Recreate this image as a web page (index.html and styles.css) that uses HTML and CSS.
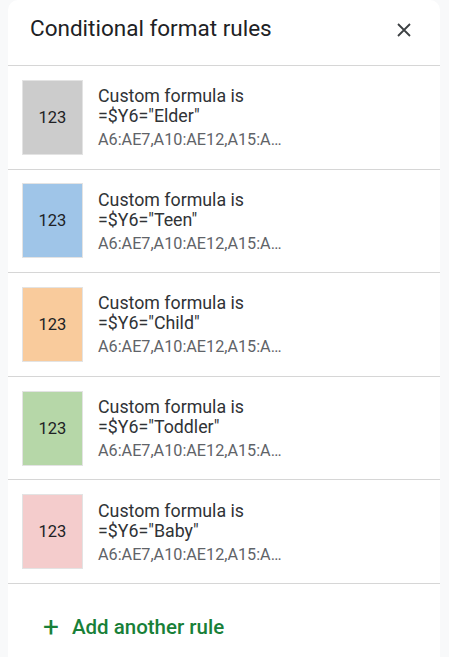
FILE: index.html
```html
<!DOCTYPE html>
<html lang="en">
<head>
    <meta charset="UTF-8">
    <title>Conditional format rules</title>
    <link rel="stylesheet" href="styles.css">
</head>
<body>
    <!-- Side panel -->
    <div class="panel">
        <div class="panel-header">
            <h2>Conditional format rules</h2>
            <button class="close-btn" aria-label="Close">
                <svg width="14" height="14" viewBox="0 0 14 14">
                    <path d="M1 1L13 13M13 1L1 13" stroke="#3c4043" stroke-width="1.8" fill="none"/>
                </svg>
            </button>
        </div>

        <div class="rule">
            <div class="swatch swatch-gray">123</div>
            <div class="rule-text">
                <div class="rule-title">Custom formula is</div>
                <div class="rule-title">=$Y6="Elder"</div>
                <div class="rule-range">A6:AE7,A10:AE12,A15:A…</div>
            </div>
        </div>

        <div class="rule">
            <div class="swatch swatch-blue">123</div>
            <div class="rule-text">
                <div class="rule-title">Custom formula is</div>
                <div class="rule-title">=$Y6="Teen"</div>
                <div class="rule-range">A6:AE7,A10:AE12,A15:A…</div>
            </div>
        </div>

        <div class="rule">
            <div class="swatch swatch-orange">123</div>
            <div class="rule-text">
                <div class="rule-title">Custom formula is</div>
                <div class="rule-title">=$Y6="Child"</div>
                <div class="rule-range">A6:AE7,A10:AE12,A15:A…</div>
            </div>
        </div>

        <div class="rule">
            <div class="swatch swatch-green">123</div>
            <div class="rule-text">
                <div class="rule-title">Custom formula is</div>
                <div class="rule-title">=$Y6="Toddler"</div>
                <div class="rule-range">A6:AE7,A10:AE12,A15:A…</div>
            </div>
        </div>

        <div class="rule">
            <div class="swatch swatch-pink">123</div>
            <div class="rule-text">
                <div class="rule-title">Custom formula is</div>
                <div class="rule-title">=$Y6="Baby"</div>
                <div class="rule-range">A6:AE7,A10:AE12,A15:A…</div>
            </div>
        </div>

        <button class="add-rule">
            <span class="plus">+</span>
            Add another rule
        </button>
    </div>
</body>
</html>
```

FILE: styles.css
```css
/* General Styles */
body {
    font-family: Roboto, 'Liberation Sans', sans-serif;
    margin: 0;
    padding: 0;
    background: #f8f9fa;
    color: #3c4043;
}

.panel {
    margin-left: 8px;
    width: 432px;
    height: 657px;
    background: #ffffff;
    border-radius: 10px 10px 0 0;
}

/* Header */
.panel-header {
    display: flex;
    align-items: center;
    justify-content: space-between;
    height: 65px;
    padding: 0 22px 0 22px;
    border-bottom: 1px solid #d6d6d6;
}

.panel-header h2 {
    margin: 0 0 10px 0;
    font-size: 22.5px;
    font-weight: 400;
    color: #202124;
}

.close-btn {
    display: flex;
    align-items: center;
    justify-content: center;
    width: 30px;
    height: 30px;
    margin: 0 -1px 6px 0;
    padding: 0;
    border: none;
    background: none;
    cursor: pointer;
}

/* Rule rows */
.rule {
    display: flex;
    align-items: center;
    gap: 15px;
    height: 102.6px;
    padding: 0 14px;
    border-bottom: 1px solid #d6d6d6;
}

.swatch {
    display: flex;
    align-items: center;
    justify-content: center;
    flex: none;
    width: 59px;
    height: 73px;
    border: 1px solid #e3e3e3;
    font-size: 16.5px;
    color: #202124;
}

.swatch-gray { background: #cccccc; }
.swatch-blue { background: #9fc5e8; }
.swatch-orange { background: #f9cb9c; }
.swatch-green { background: #b6d7a8; }
.swatch-pink { background: #f4cccc; }

.rule-text {
    margin-top: 2px;
}

.rule-title {
    font-size: 17.8px;
    line-height: 20px;
    font-weight: 400;
    color: #303336;
}

.rule-range {
    margin-top: 4px;
    font-size: 16.2px;
    line-height: 20px;
    color: #5f6368;
}

/* Add rule button */
.add-rule {
    display: flex;
    align-items: center;
    gap: 13px;
    margin: 25px 0 0 31px;
    padding: 6px 4px;
    border: none;
    background: none;
    font-family: inherit;
    font-size: 20.5px;
    font-weight: 500;
    color: #188038;
    cursor: pointer;
}

.add-rule .plus {
    font-size: 28px;
    font-weight: 400;
    line-height: 20px;
}
```
